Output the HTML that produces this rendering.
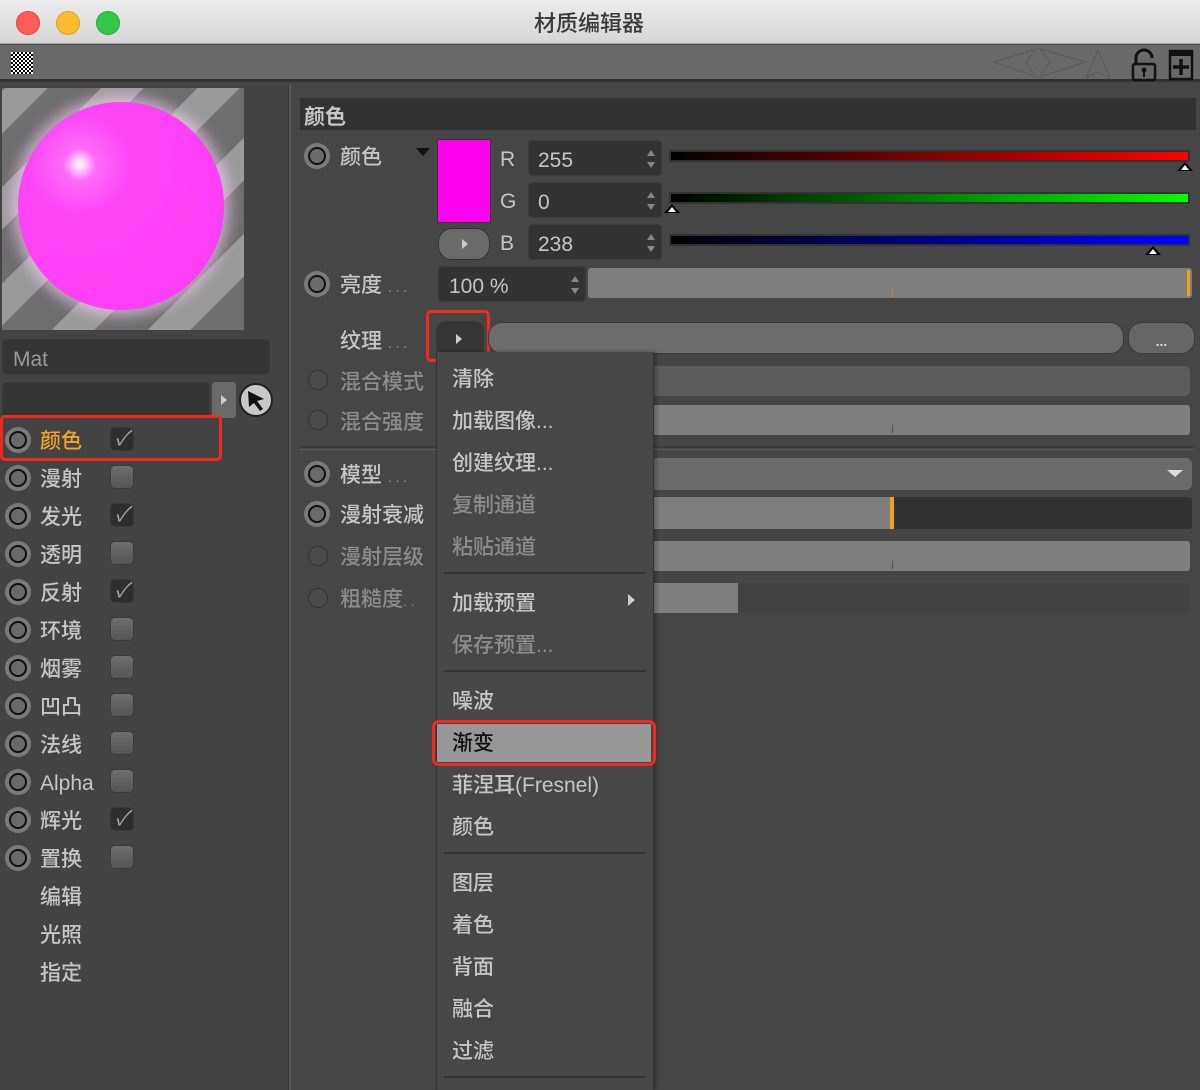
<!DOCTYPE html><html><head><meta charset="utf-8"><style>
*{margin:0;padding:0;box-sizing:border-box}
body{width:1200px;height:1090px;overflow:hidden;background:#464646;font-family:"Liberation Sans","Noto Sans CJK SC",sans-serif;color:#c6c6c6;position:relative}
.a{position:absolute}
.t{position:absolute;font-size:21px;line-height:24px;white-space:nowrap;margin-top:2px;font-weight:500}
.dim{color:#8c8c8c}
.rad{position:absolute;width:26px;height:26px;border-radius:50%;background:#7a7a7a;}
.rad:after{content:"";position:absolute;left:4px;top:4px;width:18px;height:18px;border-radius:50%;border:2px solid #111;background:#6a6a6a;box-sizing:border-box}
.rs{position:absolute;width:20px;height:20px;border-radius:50%;border:1px solid #333;background:#4a4a4a}
.cb{position:absolute;width:24px;height:24px;border-radius:5px;background:linear-gradient(#6e6e6e,#555);border:1px solid #3a3a3a}
.cb.on{background:#2e2e2e;color:#a8a8a8;font-size:20px;line-height:22px;text-align:center;font-style:italic}
.fld{position:absolute;background:#333;border-radius:4px;border:1px solid #3c3c3c}
.bar{position:absolute;background:#7e7e7e;border-radius:3px}
.sp{position:absolute;right:6px;top:9px;width:8px;height:18px}
.sp:before{content:"";position:absolute;top:0;left:0;border:4px solid transparent;border-bottom:6px solid #888;border-top:0}
.sp:after{content:"";position:absolute;bottom:0;left:0;border:4px solid transparent;border-top:6px solid #888;border-bottom:0}
.tri{position:absolute;width:0;height:0;border-left:8px solid transparent;border-right:8px solid transparent;border-bottom:9px solid #000}
.tri:after{content:"";position:absolute;left:-4px;top:3px;border-left:4px solid transparent;border-right:4px solid transparent;border-bottom:5px solid #fff}
.sep{position:absolute;height:2px;background:#2e2e2e}
.red{position:absolute;border:3px solid #f02a1e;border-radius:5px}
</style></head><body>
<div class="a" style="left:0;top:0;width:1200px;height:44px;background:linear-gradient(#ececec,#d6d6d6);border-bottom:1px solid #aaa"></div>
<div class="a" style="left:16px;top:11px;width:24px;height:24px;border-radius:50%;background:#fc5e57;border:1px solid #e0443e"></div>
<div class="a" style="left:56px;top:11px;width:24px;height:24px;border-radius:50%;background:#fdbc2e;border:1px solid #dea123"></div>
<div class="a" style="left:96px;top:11px;width:24px;height:24px;border-radius:50%;background:#33c748;border:1px solid #27aa35"></div>
<div class="t" style="left:534px;top:10px;color:#3a3a3a;font-size:22px">材质编辑器</div>
<div class="a" style="left:0;top:45px;width:1200px;height:37px;background:#696969;border-bottom:3px solid #333"></div>
<div class="a" style="left:11px;top:52px;width:22px;height:22px;background:repeating-conic-gradient(#000 0 25%,#fff 0 50%) 0 0/4px 4px"></div>
<svg class="a" style="left:990px;top:46px" width="210" height="36" viewBox="0 0 210 36">
<g fill="none" stroke="#5d5d5d" stroke-width="1.5"><path d="M4 16 L46 3 L36 16 L46 31 Z M50 3 L96 16 L50 31 L60 16 Z M96 32 L108 4 L120 32 L108 26 Z"/></g>
<path d="M146 18 V12 a8 8 0 0 1 16 0" fill="none" stroke="#111" stroke-width="3"/>
<rect x="143" y="18" width="22" height="16" rx="2" fill="none" stroke="#111" stroke-width="2.5"/><circle cx="154" cy="24" r="2.5" fill="#111"/><rect x="153" y="25" width="2" height="6" fill="#111"/>
<rect x="180" y="5" width="22" height="28" fill="none" stroke="#111" stroke-width="2.5"/><rect x="180" y="5" width="22" height="5" fill="#111"/><path d="M191 13 v16 M183 21 h16" stroke="#111" stroke-width="3.5"/>
</svg>
<div class="a" style="left:0;top:85px;width:290px;height:1005px;background:#434343;border-right:2px solid #363636"></div>
<div class="a" style="left:289px;top:85px;width:2px;height:1005px;background:#5a5a5a"></div>
<div class="a" style="left:2px;top:88px;width:242px;height:242px;overflow:hidden;background:repeating-linear-gradient(-45deg,#6e6e6e 0 38px,#9a9a9a 38px 68px)">
<div class="a" style="left:16px;top:14px;width:206px;height:208px;border-radius:50%;background:radial-gradient(circle at 30% 30%,#fff 0,#ff6af8 8%,#ff45f8 25%,#ff3cf4 100%);box-shadow:0 0 14px 6px rgba(255,210,255,.6)"></div></div>
<div class="fld" style="left:2px;top:339px;width:268px;height:36px;background:#353535"></div>
<div class="t" style="left:13px;top:346px;color:#9a9a9a">Mat</div>
<div class="fld" style="left:2px;top:382px;width:208px;height:36px;background:#353535"></div>
<div class="a" style="left:212px;top:382px;width:24px;height:36px;border-radius:4px;background:#6a6a6a"></div>
<div class="a" style="left:221px;top:395px;border-left:6px solid #ccc;border-top:5px solid transparent;border-bottom:5px solid transparent"></div>
<div class="a" style="left:239px;top:383px;width:34px;height:34px;border-radius:50%;background:#c8c8c8;border:2px solid #222"></div>
<svg class="a" style="left:246px;top:389px" width="22" height="24"><path d="M2 2 L18 10 L11 12 L17 20 L14 22 L8 14 L3 18 Z" fill="#111"/></svg>
<div class="red" style="left:0;top:415px;width:222px;height:46px"></div>
<div class="rad" style="left:5px;top:427px"></div><div class="t" style="left:40px;top:428px;color:#f4a423">颜色</div><div class="cb on" style="left:110px;top:427px">✓</div>
<div class="rad" style="left:5px;top:465px"></div><div class="t" style="left:40px;top:466px">漫射</div><div class="cb" style="left:110px;top:465px"></div>
<div class="rad" style="left:5px;top:503px"></div><div class="t" style="left:40px;top:504px">发光</div><div class="cb on" style="left:110px;top:503px">✓</div>
<div class="rad" style="left:5px;top:541px"></div><div class="t" style="left:40px;top:542px">透明</div><div class="cb" style="left:110px;top:541px"></div>
<div class="rad" style="left:5px;top:579px"></div><div class="t" style="left:40px;top:580px">反射</div><div class="cb on" style="left:110px;top:579px">✓</div>
<div class="rad" style="left:5px;top:617px"></div><div class="t" style="left:40px;top:618px">环境</div><div class="cb" style="left:110px;top:617px"></div>
<div class="rad" style="left:5px;top:655px"></div><div class="t" style="left:40px;top:656px">烟雾</div><div class="cb" style="left:110px;top:655px"></div>
<div class="rad" style="left:5px;top:693px"></div><div class="t" style="left:40px;top:694px">凹凸</div><div class="cb" style="left:110px;top:693px"></div>
<div class="rad" style="left:5px;top:731px"></div><div class="t" style="left:40px;top:732px">法线</div><div class="cb" style="left:110px;top:731px"></div>
<div class="rad" style="left:5px;top:769px"></div><div class="t" style="left:40px;top:770px">Alpha</div><div class="cb" style="left:110px;top:769px"></div>
<div class="rad" style="left:5px;top:807px"></div><div class="t" style="left:40px;top:808px">辉光</div><div class="cb on" style="left:110px;top:807px">✓</div>
<div class="rad" style="left:5px;top:845px"></div><div class="t" style="left:40px;top:846px">置换</div><div class="cb" style="left:110px;top:845px"></div>
<div class="t" style="left:40px;top:884px">编辑</div>
<div class="t" style="left:40px;top:922px">光照</div>
<div class="t" style="left:40px;top:960px">指定</div>
<div class="a" style="left:300px;top:98px;width:896px;height:32px;background:#333"></div>
<div class="t" style="left:304px;top:104px;font-weight:bold">颜色</div>
<div class="rad" style="left:304px;top:143px"></div><div class="t" style="left:340px;top:144px">颜色</div>
<div class="a" style="left:416px;top:148px;border-left:7px solid transparent;border-right:7px solid transparent;border-top:8px solid #111"></div>
<div class="a" style="left:437px;top:139px;width:54px;height:84px;background:#ff00ee;border:1px solid #333"></div>
<div class="a" style="left:438px;top:228px;width:52px;height:32px;border-radius:14px;background:#6a6a6a;border:1px solid #333"></div>
<div class="a" style="left:462px;top:239px;border-left:6px solid #ccc;border-top:5px solid transparent;border-bottom:5px solid transparent"></div>
<div class="t" style="left:500px;top:146px">R</div><div class="t" style="left:500px;top:188px">G</div><div class="t" style="left:500px;top:230px">B</div>
<div class="fld" style="left:528px;top:140px;width:134px;height:36px"><div class="sp"></div></div><div class="t" style="left:538px;top:147px">255</div>
<div class="fld" style="left:528px;top:182px;width:134px;height:36px"><div class="sp"></div></div><div class="t" style="left:538px;top:189px">0</div>
<div class="fld" style="left:528px;top:224px;width:134px;height:36px"><div class="sp"></div></div><div class="t" style="left:538px;top:231px">238</div>
<div class="a" style="left:669px;top:150px;width:521px;height:12px;background:linear-gradient(90deg,#000,#f00);border:2px solid #333"></div>
<div class="tri" style="left:1177px;top:162px"></div>
<div class="a" style="left:669px;top:192px;width:521px;height:12px;background:linear-gradient(90deg,#000,#0f0);border:2px solid #333"></div>
<div class="tri" style="left:664px;top:204px"></div>
<div class="a" style="left:669px;top:234px;width:521px;height:12px;background:linear-gradient(90deg,#000,#00f);border:2px solid #333"></div>
<div class="tri" style="left:1145px;top:246px"></div>
<div class="rad" style="left:304px;top:271px"></div><div class="t" style="left:340px;top:272px">亮度 <span style="font-size:14px;color:#999">. . .</span></div>
<div class="fld" style="left:438px;top:266px;width:148px;height:36px"><div class="sp"></div></div><div class="t" style="left:449px;top:273px">100 %</div>
<div class="bar" style="left:588px;top:268px;width:604px;height:30px"></div>
<div class="a" style="left:1187px;top:270px;width:3px;height:26px;background:#f0a020"></div>
<div class="a" style="left:892px;top:289px;width:1px;height:8px;background:#c48a30"></div>
<div class="t" style="left:340px;top:328px">纹理 <span style="font-size:14px;color:#999">. . .</span></div>
<div class="a" style="left:436px;top:321px;width:48px;height:36px;border-radius:10px;background:#363636"></div>
<div class="a" style="left:456px;top:334px;border-left:6px solid #ccc;border-top:5px solid transparent;border-bottom:5px solid transparent"></div>
<div class="red" style="left:426px;top:310px;width:64px;height:52px"></div>
<div class="a" style="left:488px;top:322px;width:636px;height:32px;border-radius:14px;background:#6c6c6c;border:1px solid #3a3a3a"></div>
<div class="a" style="left:1128px;top:322px;width:67px;height:32px;border-radius:14px;background:#666;border:1px solid #3a3a3a;color:#ddd;text-align:center;font-size:14px;line-height:36px;font-weight:bold">...</div>
<div class="rs" style="left:308px;top:370px"></div><div class="t dim" style="left:340px;top:369px">混合模式</div>
<div class="a" style="left:650px;top:366px;width:540px;height:30px;border-radius:6px;background:#5c5c5c"></div>
<div class="rs" style="left:308px;top:410px"></div><div class="t dim" style="left:340px;top:409px">混合强度</div>
<div class="bar" style="left:650px;top:405px;width:540px;height:30px"></div>
<div class="a" style="left:892px;top:425px;width:1px;height:8px;background:#555"></div>
<div class="sep" style="left:300px;top:446px;width:894px;background:#3a3a3a"></div>
<div class="a" style="left:300px;top:449px;width:894px;height:1px;background:#5a5a5a"></div>
<div class="rad" style="left:304px;top:461px"></div><div class="t" style="left:340px;top:462px">模型 <span style="font-size:14px;color:#999">. . .</span></div>
<div class="a" style="left:650px;top:458px;width:542px;height:32px;border-radius:6px;background:#6a6a6a"></div>
<div class="a" style="left:1167px;top:470px;border-left:8px solid transparent;border-right:8px solid transparent;border-top:7px solid #ddd"></div>
<div class="rad" style="left:304px;top:501px"></div><div class="t" style="left:340px;top:502px">漫射衰减</div>
<div class="bar" style="left:650px;top:497px;width:542px;height:32px;background:#333"></div>
<div class="bar" style="left:650px;top:497px;width:242px;height:32px;border-radius:3px 0 0 3px"></div>
<div class="a" style="left:890px;top:497px;width:4px;height:32px;background:#f0a020"></div>
<div class="rs" style="left:308px;top:546px"></div><div class="t dim" style="left:340px;top:544px">漫射层级</div>
<div class="bar" style="left:650px;top:541px;width:540px;height:30px"></div>
<div class="a" style="left:892px;top:561px;width:1px;height:8px;background:#555"></div>
<div class="rs" style="left:308px;top:588px"></div><div class="t dim" style="left:340px;top:586px">粗糙度<span style="font-size:14px">. .</span></div>
<div class="bar" style="left:650px;top:583px;width:540px;height:30px;background:#424242"></div>
<div class="bar" style="left:650px;top:583px;width:88px;height:30px;border-radius:0"></div>
<div class="a" style="left:436px;top:352px;width:218px;height:738px;background:#474747;border-left:1px solid #333;border-right:1px solid #333;box-shadow:2px 0 4px rgba(0,0,0,.3)"></div>
<div class="t" style="left:452px;top:366px">清除</div>
<div class="t" style="left:452px;top:408px">加载图像...</div>
<div class="t" style="left:452px;top:450px">创建纹理...</div>
<div class="t dim" style="left:452px;top:492px">复制通道</div>
<div class="t dim" style="left:452px;top:534px">粘贴通道</div>
<div class="sep" style="left:444px;top:572px;width:202px;background:#343434"></div>
<div class="t" style="left:452px;top:590px">加载预置</div>
<div class="a" style="left:628px;top:594px;border-left:7px solid #ccc;border-top:6px solid transparent;border-bottom:6px solid transparent"></div>
<div class="t dim" style="left:452px;top:632px">保存预置...</div>
<div class="sep" style="left:444px;top:670px;width:202px;background:#343434"></div>
<div class="t" style="left:452px;top:688px">噪波</div>
<div class="a" style="left:437px;top:724px;width:214px;height:38px;background:#979797"></div>
<div class="t" style="left:452px;top:730px;color:#111">渐变</div>
<div class="red" style="left:432px;top:720px;width:224px;height:46px;border-radius:7px"></div>
<div class="t" style="left:452px;top:772px">菲涅耳(Fresnel)</div>
<div class="t" style="left:452px;top:814px">颜色</div>
<div class="sep" style="left:444px;top:852px;width:202px;background:#343434"></div>
<div class="t" style="left:452px;top:870px">图层</div>
<div class="t" style="left:452px;top:912px">着色</div>
<div class="t" style="left:452px;top:954px">背面</div>
<div class="t" style="left:452px;top:996px">融合</div>
<div class="t" style="left:452px;top:1038px">过滤</div>
<div class="sep" style="left:444px;top:1076px;width:202px;background:#343434"></div>
</body></html>
